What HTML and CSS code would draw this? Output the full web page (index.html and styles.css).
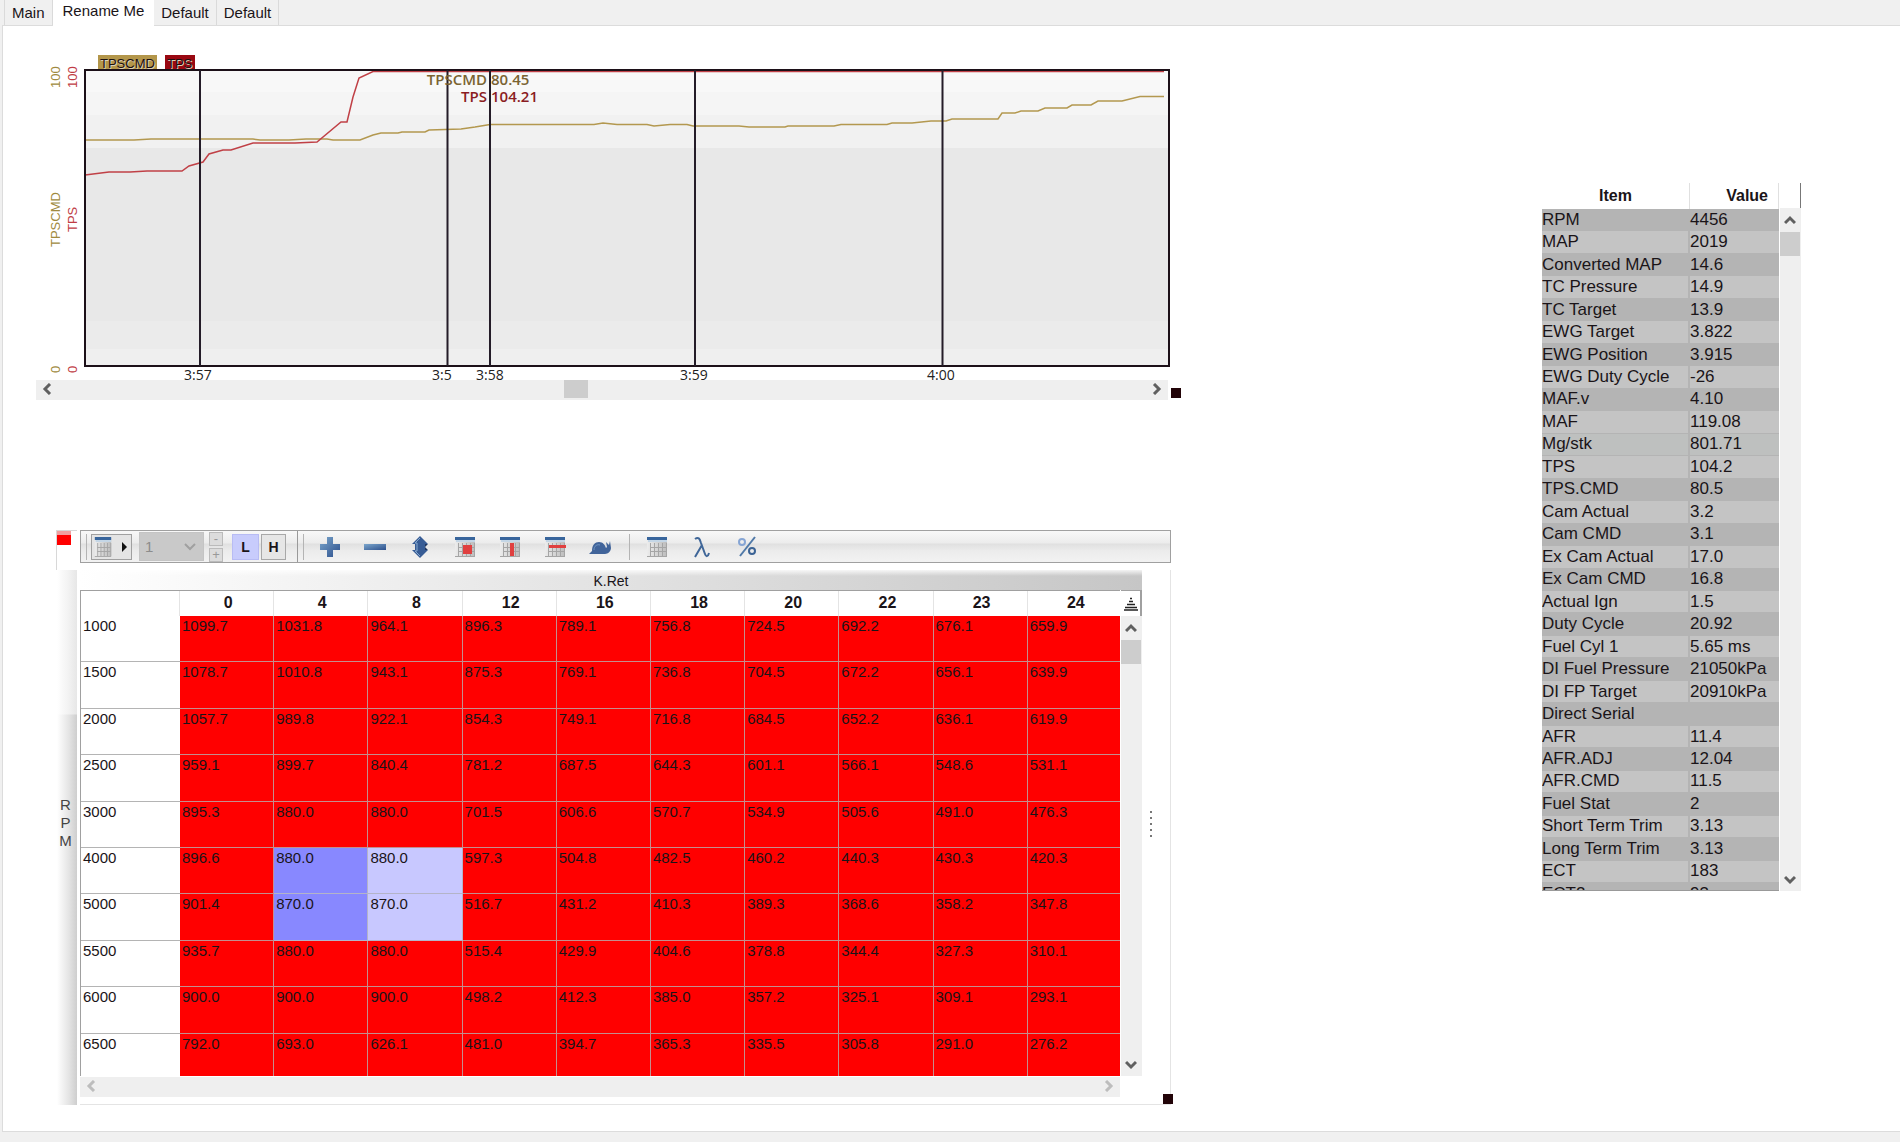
FILE: index.html
```html
<!DOCTYPE html>
<html lang="en">
<head>
<meta charset="utf-8">
<title>Rename Me</title>
<link rel="stylesheet" href="styles.css">
</head>
<body>
<svg class="defs" aria-hidden="true">
  <defs>
    <linearGradient id="blue" x1="0" y1="0" x2="1" y2="1"><stop offset="0" stop-color="#7ba6cc"/><stop offset="1" stop-color="#2c4f8c"/></linearGradient>
    <linearGradient id="sheetFill" x1="0" y1="0" x2="1" y2="0"><stop offset="0" stop-color="#ececec"/><stop offset="1" stop-color="#bcbcbc"/></linearGradient>
    <symbol id="sheet" viewBox="0 0 22 20" preserveAspectRatio="none">
      <rect x="1" y="1" width="20" height="18" fill="url(#sheetFill)"/>
      <path d="M1 0h20v3H1z" fill="#38659c"/><path d="M2 3h19v2H2z" fill="#c4d6e6"/>
      <path d="M4.500 6v13M8.500 6v13M12.500 6v13M16.500 6v13M20.500 6v13M1 19.500h20M4 10.500h16M4 14.500h16" stroke="#a5a5a5" fill="none"/>
    </symbol>
  </defs>
</svg>

<nav class="tabs">
  <button class="tab">Main</button>
  <button class="tab tab-on">Rename Me</button>
  <button class="tab">Default</button>
  <button class="tab">Default</button>
</nav>

<main class="page">
  <section class="left">
    <svg class="chart" viewBox="36 50 1145 330" role="img" aria-label="TPSCMD and TPS over time">
      <g shape-rendering="crispEdges">
        <rect x="85" y="70" width="1084" height="25" fill="#f8f8f8"/>
        <rect x="85" y="92" width="1084" height="23" fill="#f5f5f5"/>
        <rect x="85" y="115" width="1084" height="33" fill="#f1f1f1"/>
        <rect x="85" y="148" width="1084" height="173" fill="#e8e8e8"/>
        <rect x="85" y="321" width="1084" height="28" fill="#ebebeb"/>
        <rect x="85" y="349" width="1084" height="17" fill="#efefef"/>
        <rect x="98" y="55" width="59" height="15" fill="#b3964a"/>
        <rect x="165" y="55" width="30" height="15" fill="#990812"/>
      </g>
      <g class="legend"><text x="100" y="68">TPSCMD</text><text x="167" y="68">TPS</text></g>
      <g class="axis-gold">
        <text transform="translate(60 88) rotate(-90)">100</text>
        <text transform="translate(60 247) rotate(-90)">TPSCMD</text>
        <text transform="translate(60 373) rotate(-90)">0</text>
      </g>
      <g class="axis-red">
        <text transform="translate(77 88) rotate(-90)">100</text>
        <text transform="translate(77 232) rotate(-90)">TPS</text>
        <text transform="translate(77 373) rotate(-90)">0</text>
      </g>
      <path class="line-gold" d="M85 140H134L151 139H253L260 140H289L306 139H327L333 140H360L373 135L381 133H398L402 132H425L429 130L461 129L475 127L490 124.500H594L603 123L617 124.500H647L654 126L670 124.500H687L693 126H739L749 127H785L788 126H834L841 124.500H887L892 123H912L931 121H946L952 119H998L1002 113H1015L1021 111H1038L1045 108H1067L1072 105H1091L1098 101H1122L1140 96.500H1164"/>
      <path class="line-red" d="M85 175L109 172H130L147 171H182L189 166L203 162L209 154L223 150H231L253 143H295L317 142L341 122H347L353 97L359 78L373 71.500H1164"/>
      <rect class="frame" x="85" y="70" width="1084" height="296"/>
      <path class="marks" d="M200 70V366M447.500 70V366M490 70V366M695 70V366M942.500 70V366"/>
      <g class="readout">
        <text class="ink-gold" x="487" y="85" text-anchor="end">TPSCMD</text><text class="ink-gold" x="491" y="85">80.45</text>
        <text class="ink-red" x="487" y="102" text-anchor="end">TPS</text><text class="ink-red" x="491" y="102">104.21</text>
      </g>
      <g class="times">
        <text x="184" y="380">3:57</text><text x="432" y="380">3:5</text><text x="476" y="380">3:58</text><text x="680" y="380">3:59</text><text x="927" y="380">4:00</text>
      </g>
    </svg>
    <div class="chart-foot">
      <div class="hbar">
        <button class="arrow" aria-label="Scroll left"><svg width="10" height="12"><path d="M8 1L3 6l5 5"/></svg></button>
        <div class="track"><div class="thumb" style="margin-left:46.500%"></div></div>
        <button class="arrow" aria-label="Scroll right"><svg width="10" height="12"><path d="M2 1l5 5-5 5"/></svg></button>
      </div>
      <div class="handle"></div>
    </div>

    <div class="editor">
      <div class="flag"><div class="flag-red"></div></div>
      <div class="toolbar">
        <div class="group group-first">
          <span class="grip"></span>
          <button class="menu-btn" aria-label="Table view"><svg width="18" height="20"><use href="#sheet"/></svg><svg width="6" height="10"><path d="M0 0l5 5-5 5z" fill="#111"/></svg></button>
          <select class="combo" aria-label="Table number" disabled><option>1</option></select>
          <div class="spin"><button disabled aria-label="Less">-</button><button disabled aria-label="More">+</button></div>
          <button class="lh lh-on">L</button>
          <button class="lh">H</button>
        </div>
        <span class="grip"></span>
        <div class="tools">
          <button class="tool" aria-label="Increase"><svg width="22" height="22"><path d="M8 1h6v7h7v6h-7v7H8v-7H1V8h7z" fill="url(#blue)"/></svg></button>
          <button class="tool" aria-label="Decrease"><svg width="22" height="22"><path d="M0 8h22v6H0z" fill="url(#blue)"/></svg></button>
          <button class="tool" aria-label="Set value"><svg width="22" height="22"><path d="M11 0l8 8h-3v6h3l-8 8-8-8h3V8H3z" fill="#375c95"/><path d="M11 2L6 7h2v8H6l5 5" fill="none" stroke="#86a9cf"/><path d="M16 8h3l-3 3 3 3h-3z" fill="#20365f"/></svg></button>
          <button class="tool" aria-label="Fill block"><svg width="22" height="20"><use href="#sheet"/><path d="M9 8h9v9H9z" fill="#e04040"/></svg></button>
          <button class="tool" aria-label="Fill column"><svg width="22" height="20"><use href="#sheet"/><path d="M11 6h4v13h-4z" fill="#e04040"/></svg></button>
          <button class="tool" aria-label="Fill row"><svg width="22" height="20"><use href="#sheet"/><path d="M5 8h17v3H5z" fill="#e04040"/></svg></button>
          <button class="tool" aria-label="Smooth"><svg width="22" height="20"><path d="M0 17l3-3c0-6 3-9 7-9 4 0 6 3 7 6l1-1-1-5 3 3 1-4 1 7c0 3-3 6-6 6z" fill="#41649a"/><path d="M5 13c0-4 3-6 6-5" fill="none" stroke="#7196c3"/></svg></button>
        </div>
        <span class="rule"></span>
        <div class="tools">
          <button class="tool" aria-label="Table"><svg width="22" height="20"><use href="#sheet"/></svg></button>
          <button class="tool" aria-label="Lambda"><svg width="20" height="22"><path d="M3 3c4-3 5 1 6 4l4 11c1 3 3 3 4-1M10 9L3 21" fill="none" stroke="#3f6698" stroke-width="2"/></svg></button>
          <button class="tool" aria-label="Percent"><svg width="20" height="22"><path d="M18 1L3 20" stroke="#5079a8" stroke-width="2"/><circle cx="5" cy="6" r="3" fill="none" stroke="#86a5d4" stroke-width="2"/><circle cx="15" cy="15" r="3" fill="none" stroke="#3b6395" stroke-width="2"/></svg></button>
        </div>
      </div>

      <div class="side-title"><span>R</span><span>P</span><span>M</span></div>
      <div class="body">
        <div class="grid-box">
          <div class="top-title">K.Ret</div>
          <div class="viewport">
            <table class="map">
              <thead><tr><td></td><th>0</th><th>4</th><th>8</th><th>12</th><th>16</th><th>18</th><th>20</th><th>22</th><th>23</th><th>24</th></tr></thead>
              <tbody>
                <tr><th>1000</th><td>1099.7</td><td>1031.8</td><td>964.1</td><td>896.3</td><td>789.1</td><td>756.8</td><td>724.5</td><td>692.2</td><td>676.1</td><td>659.9</td></tr>
                <tr><th>1500</th><td>1078.7</td><td>1010.8</td><td>943.1</td><td>875.3</td><td>769.1</td><td>736.8</td><td>704.5</td><td>672.2</td><td>656.1</td><td>639.9</td></tr>
                <tr><th>2000</th><td>1057.7</td><td>989.8</td><td>922.1</td><td>854.3</td><td>749.1</td><td>716.8</td><td>684.5</td><td>652.2</td><td>636.1</td><td>619.9</td></tr>
                <tr><th>2500</th><td>959.1</td><td>899.7</td><td>840.4</td><td>781.2</td><td>687.5</td><td>644.3</td><td>601.1</td><td>566.1</td><td>548.6</td><td>531.1</td></tr>
                <tr><th>3000</th><td>895.3</td><td>880.0</td><td>880.0</td><td>701.5</td><td>606.6</td><td>570.7</td><td>534.9</td><td>505.6</td><td>491.0</td><td>476.3</td></tr>
                <tr><th>4000</th><td>896.6</td><td class="pick">880.0</td><td class="near">880.0</td><td>597.3</td><td>504.8</td><td>482.5</td><td>460.2</td><td>440.3</td><td>430.3</td><td>420.3</td></tr>
                <tr><th>5000</th><td>901.4</td><td class="pick">870.0</td><td class="near">870.0</td><td>516.7</td><td>431.2</td><td>410.3</td><td>389.3</td><td>368.6</td><td>358.2</td><td>347.8</td></tr>
                <tr><th>5500</th><td>935.7</td><td>880.0</td><td>880.0</td><td>515.4</td><td>429.9</td><td>404.6</td><td>378.8</td><td>344.4</td><td>327.3</td><td>310.1</td></tr>
                <tr><th>6000</th><td>900.0</td><td>900.0</td><td>900.0</td><td>498.2</td><td>412.3</td><td>385.0</td><td>357.2</td><td>325.1</td><td>309.1</td><td>293.1</td></tr>
                <tr><th>6500</th><td>792.0</td><td>693.0</td><td>626.1</td><td>481.0</td><td>394.7</td><td>365.3</td><td>335.5</td><td>305.8</td><td>291.0</td><td>276.2</td></tr>
              </tbody>
            </table>
          </div>
          <div class="map-side">
            <button class="sort" aria-label="Sort"><svg width="16" height="14"><path d="M7 1.500h2M6 4.500h4M4 7.500h8M2 10.500h12M1 13h14" stroke="#222" stroke-width="1.500"/></svg></button>
            <div class="vbar">
              <button class="arrow" aria-label="Scroll up"><svg width="12" height="10"><path d="M1 8l5-5 5 5"/></svg></button>
              <div class="vthumb"></div>
              <button class="arrow arrow-end" aria-label="Scroll down"><svg width="12" height="10"><path d="M1 2l5 5 5-5"/></svg></button>
            </div>
          </div>
          <div class="hbar hbar-off">
            <button class="arrow" disabled aria-label="Scroll left"><svg width="10" height="12"><path d="M8 1L3 6l5 5"/></svg></button>
            <div class="track"></div>
            <button class="arrow" disabled aria-label="Scroll right"><svg width="10" height="12"><path d="M2 1l5 5-5 5"/></svg></button>
          </div>
        </div>
        <div class="splitter"><i></i><i></i><i></i><i></i><i></i></div>
      </div>
      <div class="handle handle-corner"></div>
    </div>
  </section>

  <aside class="monitor">
    <div class="mon-view">
      <table class="list">
        <thead><tr><th>Item</th><th>Value</th></tr></thead>
        <tbody>
          <tr><td>RPM</td><td>4456</td></tr>
          <tr><td>MAP</td><td>2019</td></tr>
          <tr><td>Converted MAP</td><td>14.6</td></tr>
          <tr><td>TC Pressure</td><td>14.9</td></tr>
          <tr><td>TC Target</td><td>13.9</td></tr>
          <tr><td>EWG Target</td><td>3.822</td></tr>
          <tr><td>EWG Position</td><td>3.915</td></tr>
          <tr><td>EWG Duty Cycle</td><td>-26</td></tr>
          <tr><td>MAF.v</td><td>4.10</td></tr>
          <tr><td>MAF</td><td>119.08</td></tr>
          <tr class="current"><td>Mg/stk</td><td>801.71</td></tr>
          <tr><td>TPS</td><td>104.2</td></tr>
          <tr><td>TPS.CMD</td><td>80.5</td></tr>
          <tr><td>Cam Actual</td><td>3.2</td></tr>
          <tr><td>Cam CMD</td><td>3.1</td></tr>
          <tr><td>Ex Cam Actual</td><td>17.0</td></tr>
          <tr><td>Ex Cam CMD</td><td>16.8</td></tr>
          <tr><td>Actual Ign</td><td>1.5</td></tr>
          <tr><td>Duty Cycle</td><td>20.92</td></tr>
          <tr><td>Fuel Cyl 1</td><td>5.65 ms</td></tr>
          <tr><td>DI Fuel Pressure</td><td>21050kPa</td></tr>
          <tr><td>DI FP Target</td><td>20910kPa</td></tr>
          <tr><td>Direct Serial</td><td></td></tr>
          <tr><td>AFR</td><td>11.4</td></tr>
          <tr><td>AFR.ADJ</td><td>12.04</td></tr>
          <tr><td>AFR.CMD</td><td>11.5</td></tr>
          <tr><td>Fuel Stat</td><td>2</td></tr>
          <tr><td>Short Term Trim</td><td>3.13</td></tr>
          <tr><td>Long Term Trim</td><td>3.13</td></tr>
          <tr><td>ECT</td><td>183</td></tr>
          <tr><td>ECT2</td><td>93</td></tr>
        </tbody>
      </table>
    </div>
    <div class="mon-side">
      <div class="mon-corner"></div>
      <div class="vbar">
        <button class="arrow" aria-label="Scroll up"><svg width="12" height="10"><path d="M1 8l5-5 5 5"/></svg></button>
        <div class="vthumb"></div>
        <button class="arrow arrow-end" aria-label="Scroll down"><svg width="12" height="10"><path d="M1 2l5 5 5-5"/></svg></button>
      </div>
    </div>
  </aside>
</main>
</body>
</html>
```

FILE: styles.css
```css
* { box-sizing: border-box; }

body {
  margin: 0;
  min-height: 100vh;
  display: flex;
  flex-direction: column;
  padding-bottom: 10px;
  background: #f0f0f0;
  color: #1a1418;
  font: 15px "Liberation Sans", Arial, sans-serif;
}

button {
  margin: 0;
  padding: 0;
  border: 0;
  background: none;
  color: inherit;
  font: inherit;
}

table { border-collapse: separate; border-spacing: 0; }

.defs { position: absolute; width: 0; height: 0; }

/* Tabs */
.tabs { display: flex; height: 25px; padding-left: 4px; }
.tab {
  height: 25px;
  padding: 0 7px;
  border: 1px solid #dadada;
  border-width: 0 1px 0 0;
}
.tab:first-child { border-left-width: 1px; }
.tab-on {
  position: relative;
  height: 26px;
  padding: 0 10px 6px;
  border: 0;
  background: #fff;
}

/* Page */
.page {
  flex: 1;
  display: flex;
  align-items: flex-start;
  gap: 361px;
  margin-left: 2px;
  padding: 24px 99px 20px 33px;
  border: 1px solid #dcdcdc;
  border-right: 0;
  background: #fff;
}
.left { flex: 1; min-width: 0; }

/* Chart */
.chart { display: block; width: 100%; height: auto; overflow: visible; }
.frame { fill: none; stroke: #1c1018; stroke-width: 2; }
.marks { stroke: #241c28; stroke-width: 2; }
.line-gold { fill: none; stroke: #b3984f; stroke-width: 1.5; }
.line-red { fill: none; stroke: #c04046; stroke-width: 1.5; }
.legend { font-size: 13px; fill: #1b1012; }
.legend text { text-shadow: 1px 1px 0 #ddd0b8; }
.axis-gold { font-size: 13px; fill: #a08a3e; }
.axis-red { font-size: 13px; fill: #c03c44; }
.readout { font: 600 15px "Open Sans", sans-serif; }
.ink-gold { fill: #7a6332; }
.ink-red { fill: #8a1c22; }
.times { font: 14px "Open Sans", sans-serif; fill: #222; }

/* Scroll bars */
.chart-foot { display: flex; gap: 3px; align-items: flex-end; }
.hbar { flex: 1; display: flex; height: 20px; background: #efefef; }
.track { flex: 1; }
.thumb { width: 24px; height: 18px; background: #cdcdcd; }
.arrow { flex: none; display: grid; place-items: center; width: 22px; height: 18px; }
.arrow path { fill: none; stroke: #606060; stroke-width: 3; }
.arrow:disabled path { stroke: #bdbdbd; }
.vbar { flex: 1; display: flex; flex-direction: column; background: #efefef; }
.vbar .arrow { width: 19px; height: 24px; }
.vthumb { width: 20px; height: 24px; background: #cdcdcd; }
.vbar .arrow-end { height: 22px; margin-top: auto; }
.handle { width: 10px; height: 10px; margin-bottom: 2px; background: #220408; }

/* Map editor */
.editor {
  position: relative;
  display: grid;
  grid-template-columns: 21px 1fr;
  column-gap: 3px;
  margin: 130px 10px 0 20px;
}
.flag { height: 40px; border: 1px solid #d8d8d8; border-width: 1px 0 0 1px; }
.flag-red { width: 14px; height: 14px; background: linear-gradient(#f0a0a0 0 4px, #f00 4px); }
.toolbar {
  display: flex;
  align-items: center;
  height: 33px;
  border: 1px solid #a0a0a0;
  background: linear-gradient(#f8f8f8 0, #ececec 12px, #e0e0e0 13px, #ececec 20px, #f2f2f2);
}
.group { display: flex; align-items: center; height: 31px; }
.group-first { width: 217px; border-right: 1px solid #999; }
.grip { width: 2px; height: 26px; margin-left: 5px; border-left: 1px solid #b4b4b4; }
.menu-btn {
  display: flex;
  align-items: center;
  gap: 10px;
  width: 41px;
  height: 26px;
  margin-left: 3px;
  padding-left: 2px;
  border: 1px solid #a0a0a0;
  background: #e4e4e4;
}
.combo {
  appearance: none;
  width: 65px;
  height: 29px;
  margin-left: 7px;
  padding: 0 5px;
  border: 1px solid #c4c4c4;
  border-radius: 0;
  opacity: 1;
  color: #8c8c8c;
  font: inherit;
  background: #c9c9c9 url("data:image/svg+xml,%3Csvg xmlns='http://www.w3.org/2000/svg' width='12' height='8'%3E%3Cpath d='M1 1l5 5 5-5' fill='none' stroke='%23a0a0a0' stroke-width='2'/%3E%3C/svg%3E") no-repeat right 7px center;
}
.spin { display: flex; flex-direction: column; gap: 2px; margin-left: 5px; }
.spin button {
  width: 14px;
  height: 14px;
  border: 1px solid #bbb;
  color: #999;
  background: #dcdcdc;
  font-size: 13px;
  line-height: 11px;
}
.lh { width: 25px; height: 26px; border: 1px solid #a8a8a8; background: #e6e6e6; font-weight: 700; font-size: 14px; }
.lh-on { width: 27px; margin: 0 2px 0 9px; border-color: #b8bcf4; background: #c8ccfc; }
.tools { display: flex; gap: 15px; margin-left: 10px; }
.tool { display: grid; place-items: center; width: 30px; height: 26px; }
.rule { width: 1px; height: 26px; margin-left: 14px; background: #b4b4b4; }
.rule + .tools { margin-left: 12px; }

.side-title {
  display: flex;
  flex-direction: column;
  align-items: center;
  justify-content: center;
  margin-left: 1px;
  padding: 0 3px 30px 0;
  color: #444;
  line-height: 18px;
  background: linear-gradient(rgba(255, 255, 255, .5) 144px, transparent 145px), linear-gradient(90deg, #fff, #e4e4e4 60%, #cecece);
}
.body {
  display: flex;
  padding-bottom: 7px;
  border: 1px solid #e4e4e4;
  border-width: 0 1px 1px 0;
}
.grid-box { flex: 1; min-width: 0; display: grid; grid-template-columns: 1fr 22px; }
.top-title {
  grid-column: 1 / 3;
  height: 20px;
  text-align: center;
  font-size: 14px;
  line-height: 22px;
  background: linear-gradient(rgba(255, 255, 255, .8), transparent 6px), linear-gradient(90deg, #fff, #c6c6c6);
}
.viewport {
  height: 486px;
  overflow: hidden;
  border: 1px solid #a0a0a0;
  border-width: 1px 0 0 1px;
}
.map { width: calc(100% + 2px); height: 489px; table-layout: fixed; }
.map thead tr { height: 25px; }
.map thead td { width: 99px; border-right: 1px solid #e4e4e4; }
.map thead th { padding: 0 0 2px 3px; font-size: 16px; border-right: 1px solid #e4e4e4; }
.map tbody th {
  padding: 0 2px;
  text-align: left;
  vertical-align: top;
  font-weight: 400;
  border-bottom: 1px solid #b4b4b4;
}
.map tbody td {
  padding: 0 2px;
  vertical-align: top;
  background: #f00;
  border: 1px solid #c48e8e;
  border-width: 0 1px 1px 0;
}
.map tbody th, .map tbody td { line-height: 19px; }
.map tbody .pick { background: #8888ff; border-color: #b4b4c8; }
.map tbody .near { background: #c8c8ff; border-color: #b4b4c8; }
.map-side { display: flex; flex-direction: column; padding-left: 1px; }
.sort {
  display: grid;
  place-items: center;
  height: 26px;
  border: 1px solid #a0a0a0;
  border-width: 1px 2px 0 0;
}
.hbar-off { margin-top: 1px; }
.splitter {
  display: flex;
  flex-direction: column;
  align-items: center;
  justify-content: center;
  gap: 4px;
  width: 28px;
  padding: 0 10px 20px 0;
}
.splitter i { width: 2px; height: 2px; background: #777; }
.handle-corner { position: absolute; right: -2px; bottom: 1px; margin: 0; }

/* Value list */
.monitor { display: flex; width: 259px; margin-top: 133px; }
.mon-view { flex: 1; height: 708px; overflow: hidden; border-bottom: 1px solid #999; }
.list { width: 100%; height: 723px; table-layout: fixed; font-size: 17px; line-height: 20px; }
.list thead tr { height: 26px; }
.list th { padding: 0; font-size: 16px; border-right: 1px solid #e0e0e0; }
.list th:first-child { width: 148px; }
.list th:last-child { padding-right: 10px; text-align: right; }
.list td { padding: 0; white-space: nowrap; background: #b4b4b4; border-bottom: 1px solid #b4b4b4; }
.list td:first-child { border-right: 2px solid #b4b4b4; }
.list tr:nth-child(even) td { background: #c4c4c4; }
.list .current td { background: #bec0bf; }
.mon-side { display: flex; flex-direction: column; width: 22px; padding-left: 1px; }
.mon-corner { height: 25px; border-right: 1px solid #777; }
```
